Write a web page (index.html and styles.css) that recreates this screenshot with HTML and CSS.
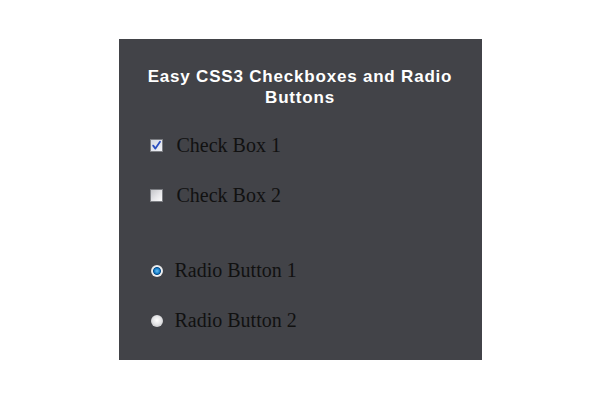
FILE: index.html
```html
<!DOCTYPE html>
<html>
<head>
<meta charset="utf-8">
<link rel="stylesheet" href="styles.css">
</head>
<body>
<div class="panel">
  <h1 class="title">Easy CSS3 Checkboxes and Radio Buttons</h1>
  <div class="group">
    <label class="row"><span class="box checked"><svg viewBox="0 0 13 13" width="13" height="13"><path d="M3.2 6.6 L5.4 9.6 L10 2.8" fill="none" stroke="#2a4ec0" stroke-width="1.8" stroke-linecap="round" stroke-linejoin="round"/></svg></span><span class="lbl">Check Box 1</span></label>
    <label class="row"><span class="box"></span><span class="lbl">Check Box 2</span></label>
  </div>
  <div class="group radios">
    <label class="row"><span class="radio checked"></span><span class="lbl">Radio Button 1</span></label>
    <label class="row"><span class="radio"></span><span class="lbl">Radio Button 2</span></label>
  </div>
</div>
</body>
</html>
```
FILE: styles.css
```css
html, body { margin: 0; padding: 0; background: #ffffff; }
body { padding-top: 39px; }
.panel {
  width: 363px;
  height: 321px;
  margin: 0 auto;
  background: #424348;
  box-sizing: border-box;
  padding-top: 27px;
}
.title {
  margin: 0 20px;
  font-family: "Liberation Sans", Arial, sans-serif;
  font-weight: bold;
  font-size: 17px;
  letter-spacing: 0.8px;
  line-height: 21px;
  color: #ffffff;
  text-align: center;
}
.group { display: flex; flex-direction: column; gap: 27px; margin-top: 26px; padding-left: 31px; }
.radios { margin-top: 52px; }
.row { display: flex; align-items: center; height: 23px; }
.lbl {
  font-family: "Liberation Serif", "Times New Roman", serif;
  font-size: 20px;
  color: #111111;
  margin-left: 14px;
}
.box {
  width: 13px; height: 13px; box-sizing: border-box;
  border: 1px solid #7c7e83;
  background: linear-gradient(135deg, #c4c5c9 0%, #e6e6e9 55%, #fbfbfb 100%);
  display: block; position: relative;
}
.box svg { position: absolute; left: -1px; top: -1px; }
.box.checked { background: linear-gradient(135deg, #d3d7e2 0%, #f1f2f6 100%); }
.radio {
  width: 12px; height: 12px; border-radius: 50%; display: block; margin-left: 1px; margin-right: -2px;
  background: radial-gradient(circle at 50% 45%, #ffffff 0%, #e6e6e8 45%, #c2c3c6 85%, #9a9ba0 100%);
}
.radio.checked {
  background: radial-gradient(circle at 50% 50%, #6fc2f0 0%, #1b86d2 28%, #0c4f8a 42%, #f2f2f2 52%, #d8d8da 80%, #a3a4a8 100%);
}
```
